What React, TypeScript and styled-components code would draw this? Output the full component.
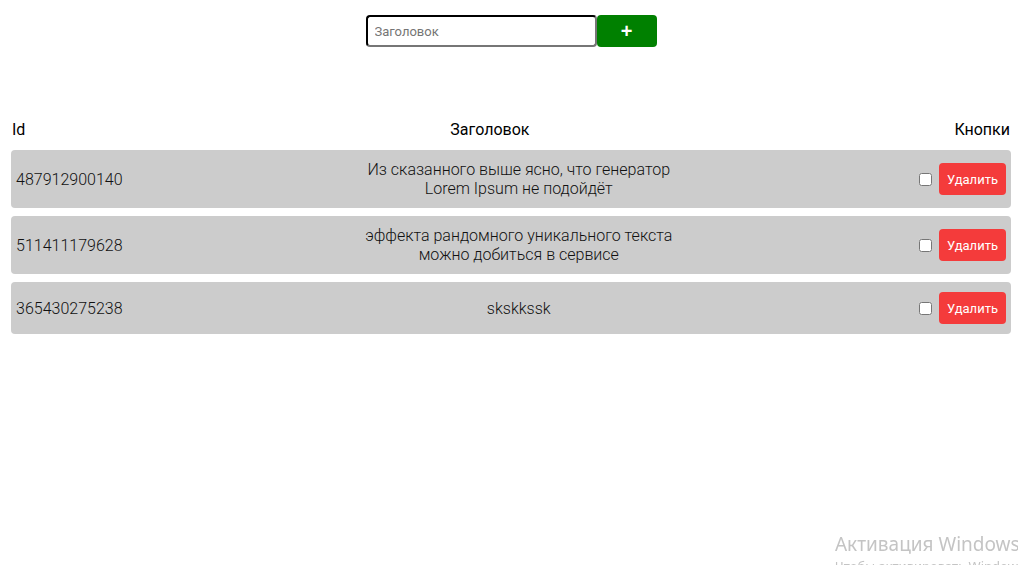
import React from "react";
import styled, { createGlobalStyle } from "styled-components";

const GlobalStyle = createGlobalStyle`
  html, body { margin: 0; padding: 0; background: #fff; }
  body { font-family: Roboto, "Noto Sans", sans-serif; color: #000; }
`;

const Page = styled.div`
  padding: 15px 7px 0 11px;
`;

const Form = styled.form`
  display: flex;
  justify-content: center;
  margin: 0;
`;

const Input = styled.input`
  box-sizing: border-box;
  width: 231px;
  height: 32px;
  border: 2px inset #767676;
  border-color: #222 #767676 #767676 #222;
  border-radius: 4px;
  padding: 0 7px;
  font-family: Roboto, sans-serif;
  font-size: 13px;
  color: #000;
  outline: none;
  &::placeholder { color: #757575; }
`;

const AddButton = styled.button`
  box-sizing: border-box;
  width: 60px;
  height: 32px;
  border: none;
  border-radius: 4px;
  background: #008000;
  color: #fff;
  font-family: Arial, "Liberation Sans", sans-serif;
  font-weight: bold;
  font-size: 20px;
  line-height: 1;
  padding: 0;
`;

const Header = styled.div`
  display: flex;
  justify-content: space-between;
  margin-top: 73px;
  margin-bottom: 11px;
  padding: 0 1px;
  font-size: 16px;
  line-height: 19px;
`;

const List = styled.div`
  display: flex;
  flex-direction: column;
  gap: 8px;
`;

const Row = styled.div`
  display: flex;
  justify-content: space-between;
  align-items: center;
  background: #cccccc;
  border-radius: 4px;
  padding: 10px 5px;
  font-size: 16px;
  line-height: 19px;
  font-weight: 300;
  color: #111;
`;

const IdCell = styled.div``;

const Title = styled.div`
  width: 320px;
  text-align: center;
`;

const Actions = styled.div`
  display: flex;
  align-items: center;
`;

const Check = styled.input`
  width: 13px;
  height: 13px;
  margin: 0 7px 0 4px;
`;

const DeleteButton = styled.button`
  box-sizing: border-box;
  width: 67px;
  height: 32px;
  border: none;
  border-radius: 4px;
  background: #f43b3b;
  color: #fff;
  font-family: Roboto, sans-serif;
  font-size: 13px;
  padding: 0;
`;

const Watermark = styled.div`
  position: fixed;
  left: 835px;
  top: 531px;
  color: #c4c4c4;
  font-family: "Noto Sans", "Open Sans", sans-serif;
  white-space: nowrap;
  pointer-events: none;
`;

const WmTitle = styled.div`
  font-size: 19px;
  line-height: 26px;
`;

const WmSub = styled.div`
  font-size: 13px;
  line-height: 18px;
`;

const items = [
  { id: "487912900140", title: "Из сказанного выше ясно, что генератор Lorem Ipsum не подойдёт" },
  { id: "511411179628", title: "эффекта рандомного уникального текста можно добиться в сервисе" },
  { id: "365430275238", title: "skskkssk" },
];

export default function App() {
  return (
    <>
      <GlobalStyle />
      <Page>
        <Form onSubmit={(e) => e.preventDefault()}>
          <Input placeholder="Заголовок" />
          <AddButton type="submit">+</AddButton>
        </Form>
        <Header>
          <span>Id</span>
          <span>Заголовок</span>
          <span>Кнопки</span>
        </Header>
        <List>
          {items.map((it) => (
            <Row key={it.id}>
              <IdCell>{it.id}</IdCell>
              <Title>{it.title}</Title>
              <Actions>
                <Check type="checkbox" />
                <DeleteButton>Удалить</DeleteButton>
              </Actions>
            </Row>
          ))}
        </List>
      </Page>
      <Watermark>
        <WmTitle>Активация Windows</WmTitle>
        <WmSub>Чтобы активировать Windows, перейдите в раздел</WmSub>
      </Watermark>
    </>
  );
}
